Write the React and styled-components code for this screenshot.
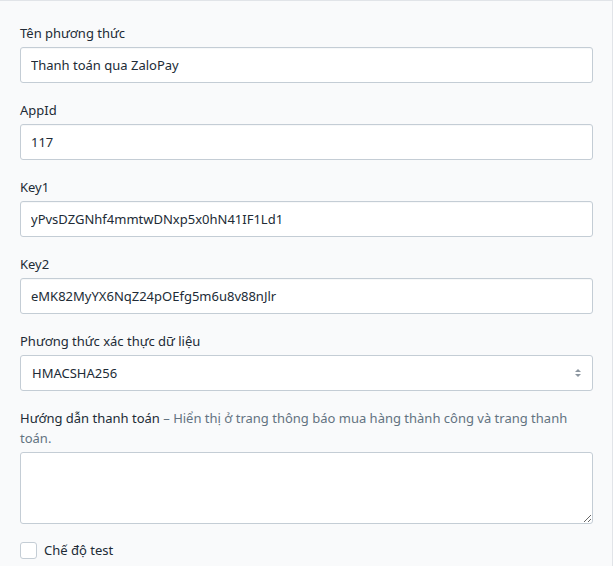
import styled, { createGlobalStyle } from "styled-components";

const GlobalStyle = createGlobalStyle`
  body {
    margin: 0;
    background: #ffffff;
    font-family: "Noto Sans", "Segoe UI", Arial, sans-serif;
    color: #212b36;
  }
  * { box-sizing: border-box; }
`;

const Card = styled.div`
  width: 613px;
  height: 566px;
  overflow: hidden;
  background: #f9fafb;
  border-top: 1px solid #e1e4e8;
  border-right: 1px solid #e1e4e8;
  padding: 22px 20px 0 20px;
  display: flex;
  flex-direction: column;
`;

const Field = styled.div`
  display: flex;
  flex-direction: column;
  margin-bottom: 17px;
`;

const Label = styled.label`
  font-size: 13px;
  line-height: 20px;
  color: #212b36;
  margin-bottom: 4px;
`;

const Hint = styled.span`
  color: #637381;
`;

const Input = styled.input`
  width: 573px;
  height: 36px;
  border: 1px solid #c4cdd5;
  border-radius: 3px;
  background: #fff;
  padding: 0 10px;
  font-family: inherit;
  font-size: 13px;
  color: #212b36;
  box-shadow: inset 0 1px 0 0 rgba(99, 115, 129, 0.05);
  outline: none;
`;

const SelectBox = styled.div`
  position: relative;
  width: 573px;
  height: 36px;
  border: 1px solid #c4cdd5;
  border-radius: 3px;
  background: #fff;
  display: flex;
  align-items: center;
  font-size: 13px;
  color: #212b36;
`;

const SelectValue = styled.span`
  padding-left: 11px;
`;

const Arrows = styled.svg`
  position: absolute;
  right: 10px;
  top: 12px;
`;

const TextArea = styled.textarea`
  width: 573px;
  height: 72px;
  border: 1px solid #c4cdd5;
  border-radius: 3px;
  background: #fff;
  font-family: inherit;
  font-size: 13px;
  resize: vertical;
  outline: none;
`;

const CheckRow = styled.label`
  display: flex;
  align-items: center;
  gap: 7px;
  font-size: 13px;
  color: #212b36;
`;

const Box = styled.span`
  width: 17px;
  height: 17px;
  border: 1px solid #c4cdd5;
  border-radius: 3px;
  background: #fff;
`;

const fields = [
  ["Tên phương thức", "Thanh toán qua ZaloPay"],
  ["AppId", "117"],
  ["Key1", "yPvsDZGNhf4mmtwDNxp5x0hN41IF1Ld1"],
  ["Key2", "eMK82MyYX6NqZ24pOEfg5m6u8v88nJlr"],
];

export default function App() {
  return (
    <>
      <GlobalStyle />
      <Card>
        {fields.map(([label, value]) => (
          <Field key={label}>
            <Label>{label}</Label>
            <Input defaultValue={value} />
          </Field>
        ))}
        <Field>
          <Label>Phương thức xác thực dữ liệu</Label>
          <SelectBox>
            <SelectValue>HMACSHA256</SelectValue>
            <Arrows width="8" height="10" viewBox="0 0 8 10">
              <path d="M4 1 L7 4 H1 Z" fill="#8c96a0" />
              <path d="M4 9 L7 6 H1 Z" fill="#8c96a0" />
            </Arrows>
          </SelectBox>
        </Field>
        <Field>
          <Label>
            Hướng dẫn thanh toán <Hint>– Hiển thị ở trang thông báo mua hàng thành công và trang thanh toán.</Hint>
          </Label>
          <TextArea />
        </Field>
        <CheckRow>
          <Box />
          Chế độ test
        </CheckRow>
      </Card>
    </>
  );
}
